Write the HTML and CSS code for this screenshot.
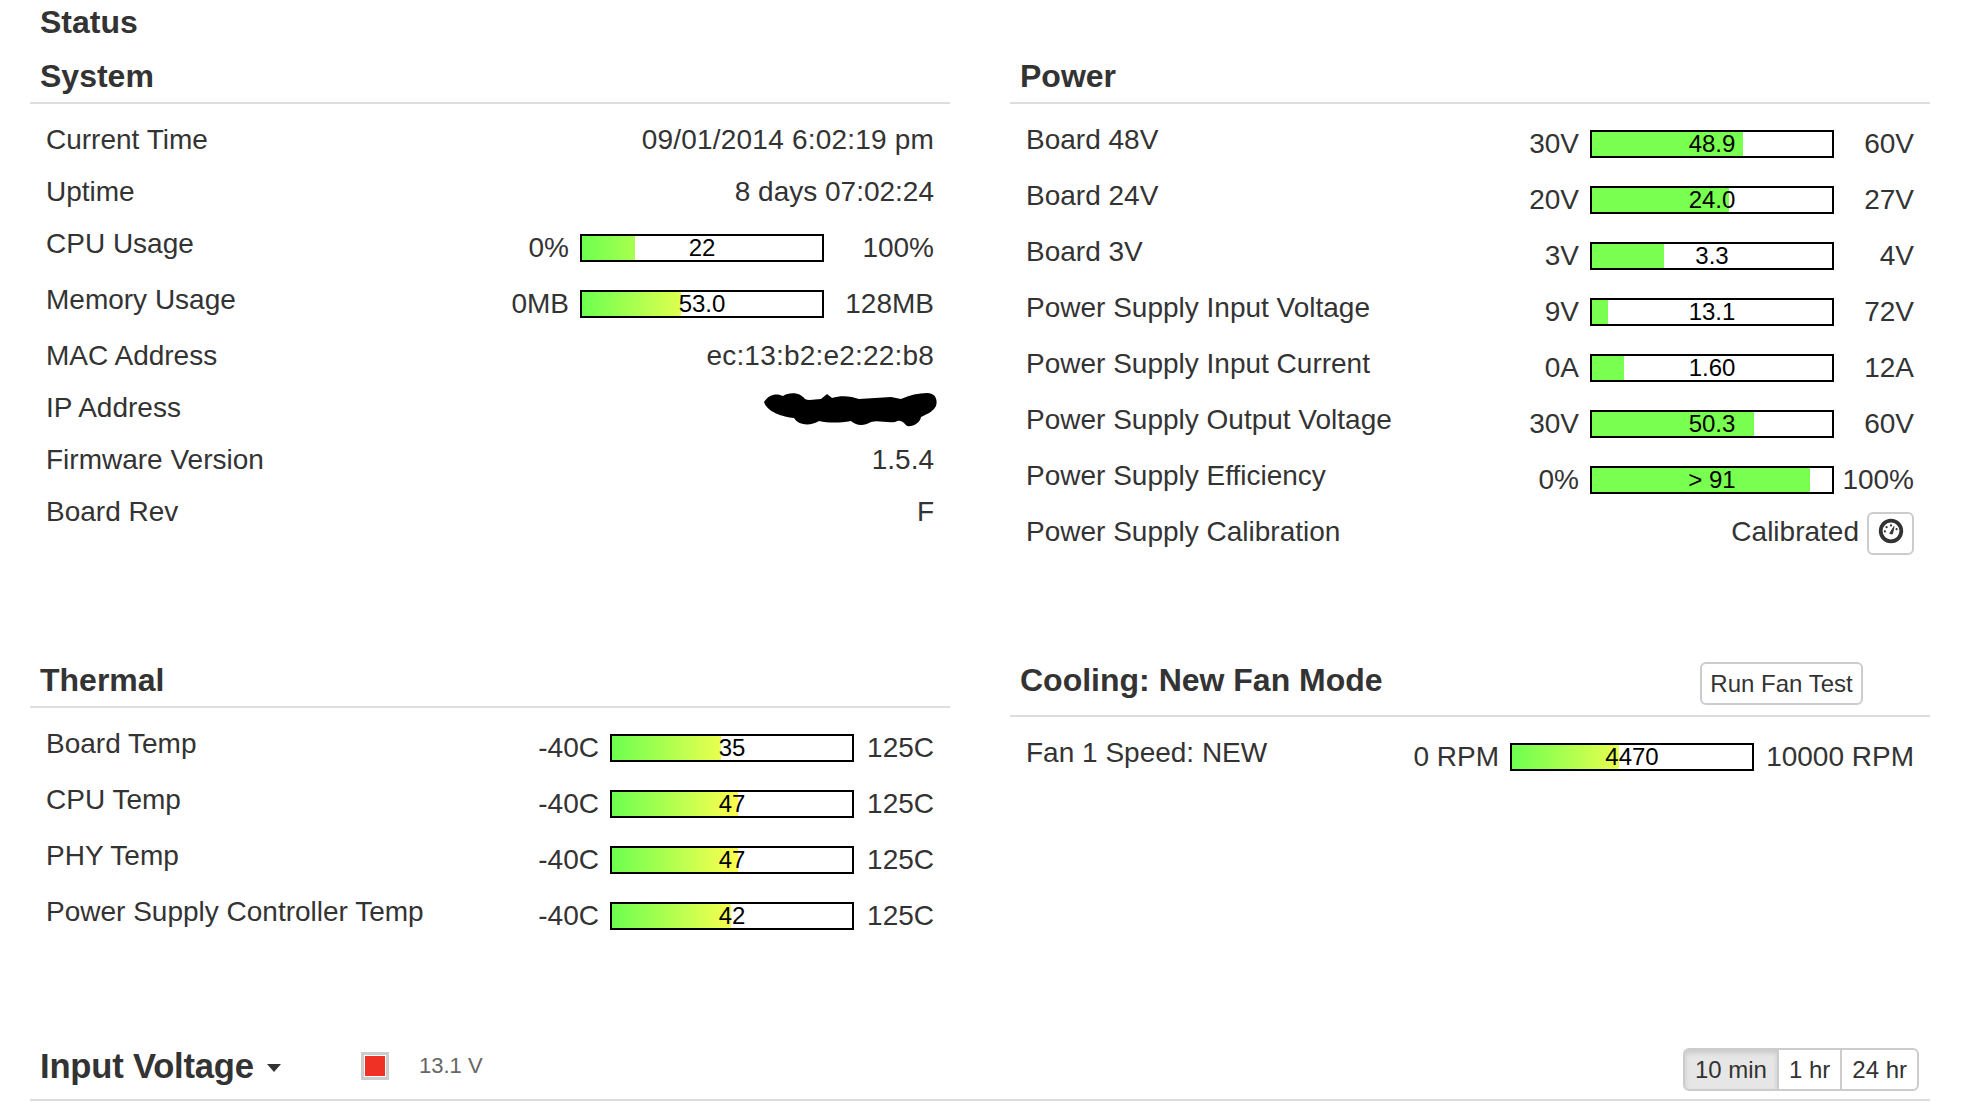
FILE: index.html
```html
<!DOCTYPE html>
<html>
<head>
    <meta charset="UTF-8">
    <title>Status</title>
    <link rel="stylesheet" href="styles.css">
</head>
<body>

    <h1 class="page_title">Status</h1>

    <div class="panels">

        <div class="panel">
            <h2 class="panel_head">System</h2>
            <div class="rows">
                <div class="row row_plain"><span>Current Time</span><span class="val_wide">09/01/2014 6:02:19 pm</span></div>
                <div class="row row_plain"><span>Uptime</span><span>8 days 07:02:24</span></div>
                <div class="row">
                    <span>CPU Usage</span>
                    <div class="meter meter_sys">
                        <span class="meter_min">0%</span>
                        <div class="bar"><div class="fill" style="width:22%"></div><div class="bar_val">22</div></div>
                        <span class="meter_max">100%</span>
                    </div>
                </div>
                <div class="row">
                    <span>Memory Usage</span>
                    <div class="meter meter_sys">
                        <span class="meter_min">0MB</span>
                        <div class="bar"><div class="fill" style="width:41.4%"></div><div class="bar_val">53.0</div></div>
                        <span class="meter_max">128MB</span>
                    </div>
                </div>
                <div class="row row_plain"><span>MAC Address</span><span class="val_wide">ec:13:b2:e2:22:b8</span></div>
                <div class="row row_plain">
                    <span>IP Address</span>
                    <svg class="scribble" width="174" height="34" viewBox="0 0 174 34"><path d="M1 9C6 1 14 0 20 3C26-1 37-1 42 6C46 8 52 6 58 6L64 1L69 5C78 2 88 3 96 6L128 4L138 6C146 2 156 0 164 0C172 0 175 6 173 13C170 19 164 21 158 24C157 30 150 34 144 33C140 29 138 26 132 29C122 30 116 27 108 29C100 34 92 32 88 28C76 30 66 30 56 28C48 33 36 33 31 25C20 24 4 19 1 9Z"/></svg>
                </div>
                <div class="row row_plain"><span>Firmware Version</span><span>1.5.4</span></div>
                <div class="row row_plain"><span>Board Rev</span><span>F</span></div>
            </div>
        </div>

        <div class="panel">
            <h2 class="panel_head">Power</h2>
            <div class="rows">
                <div class="row">
                    <span>Board 48V</span>
                    <div class="meter">
                        <span class="meter_min">30V</span>
                        <div class="bar"><div class="fill fill_solid" style="width:63%"></div><div class="bar_val">48.9</div></div>
                        <span class="meter_max">60V</span>
                    </div>
                </div>
                <div class="row">
                    <span>Board 24V</span>
                    <div class="meter">
                        <span class="meter_min">20V</span>
                        <div class="bar"><div class="fill fill_solid" style="width:57.1%"></div><div class="bar_val">24.0</div></div>
                        <span class="meter_max">27V</span>
                    </div>
                </div>
                <div class="row">
                    <span>Board 3V</span>
                    <div class="meter">
                        <span class="meter_min">3V</span>
                        <div class="bar"><div class="fill fill_solid" style="width:30%"></div><div class="bar_val">3.3</div></div>
                        <span class="meter_max">4V</span>
                    </div>
                </div>
                <div class="row">
                    <span>Power Supply Input Voltage</span>
                    <div class="meter">
                        <span class="meter_min">9V</span>
                        <div class="bar"><div class="fill fill_solid" style="width:6.5%"></div><div class="bar_val">13.1</div></div>
                        <span class="meter_max">72V</span>
                    </div>
                </div>
                <div class="row">
                    <span>Power Supply Input Current</span>
                    <div class="meter">
                        <span class="meter_min">0A</span>
                        <div class="bar"><div class="fill fill_solid" style="width:13.3%"></div><div class="bar_val">1.60</div></div>
                        <span class="meter_max">12A</span>
                    </div>
                </div>
                <div class="row">
                    <span>Power Supply Output Voltage</span>
                    <div class="meter">
                        <span class="meter_min">30V</span>
                        <div class="bar"><div class="fill fill_solid" style="width:67.7%"></div><div class="bar_val">50.3</div></div>
                        <span class="meter_max">60V</span>
                    </div>
                </div>
                <div class="row">
                    <span>Power Supply Efficiency</span>
                    <div class="meter">
                        <span class="meter_min">0%</span>
                        <div class="bar"><div class="fill fill_solid" style="width:91%"></div><div class="bar_val">&gt; 91</div></div>
                        <span class="meter_max">100%</span>
                    </div>
                </div>
                <div class="row">
                    <span>Power Supply Calibration</span>
                    <div class="calib">
                        <span>Calibrated</span>
                        <button class="btn btn_icon">
                            <svg width="26" height="26" viewBox="0 0 26 26"><circle cx="13" cy="13" r="10.3" fill="none" stroke="#333" stroke-width="3.8"/><path d="M11.8 15.4L16 8.6L14.4 16Z" fill="#333" stroke="#333"/><circle cx="13" cy="7.4" r="1.1" fill="#333"/><circle cx="8.6" cy="9.2" r="1.1" fill="#333"/><circle cx="6.9" cy="13.4" r="1.1" fill="#333"/><circle cx="18.6" cy="11.2" r="1.1" fill="#333"/></svg>
                        </button>
                    </div>
                </div>
            </div>
        </div>

        <div class="panel">
            <h2 class="panel_head">Thermal</h2>
            <div class="rows">
                <div class="row">
                    <span>Board Temp</span>
                    <div class="meter">
                        <span class="meter_min">-40C</span>
                        <div class="bar"><div class="fill" style="width:45.5%"></div><div class="bar_val">35</div></div>
                        <span class="meter_max">125C</span>
                    </div>
                </div>
                <div class="row">
                    <span>CPU Temp</span>
                    <div class="meter">
                        <span class="meter_min">-40C</span>
                        <div class="bar"><div class="fill" style="width:52.7%"></div><div class="bar_val">47</div></div>
                        <span class="meter_max">125C</span>
                    </div>
                </div>
                <div class="row">
                    <span>PHY Temp</span>
                    <div class="meter">
                        <span class="meter_min">-40C</span>
                        <div class="bar"><div class="fill" style="width:52.7%"></div><div class="bar_val">47</div></div>
                        <span class="meter_max">125C</span>
                    </div>
                </div>
                <div class="row">
                    <span>Power Supply Controller Temp</span>
                    <div class="meter">
                        <span class="meter_min">-40C</span>
                        <div class="bar"><div class="fill" style="width:49.7%"></div><div class="bar_val">42</div></div>
                        <span class="meter_max">125C</span>
                    </div>
                </div>
            </div>
        </div>

        <div class="panel">
            <h2 class="panel_head panel_head_btn">Cooling: New Fan Mode <button class="btn btn_test">Run Fan Test</button></h2>
            <div class="rows">
                <div class="row">
                    <span>Fan 1 Speed: NEW</span>
                    <div class="meter meter_fan">
                        <span class="meter_min">0 RPM</span>
                        <div class="bar"><div class="fill" style="width:44.7%"></div><div class="bar_val">4470</div></div>
                        <span class="meter_max">10000 RPM</span>
                    </div>
                </div>
            </div>
        </div>

    </div>

    <div class="graph_head">
        <h2 class="graph_title">Input Voltage <span class="caret"></span></h2>
        <span class="swatch"><span class="swatch_color"></span></span>
        <span class="graph_val">13.1 V</span>
        <div class="btn_group">
            <button class="btn active">10 min</button>
            <button class="btn">1 hr</button>
            <button class="btn">24 hr</button>
        </div>
    </div>

</body>
</html>
```

FILE: styles.css
```css
body{
    margin:0;
    padding:0 32px 0 30px;
    font-family:"Liberation Sans",Arial,sans-serif;
    font-size:28px;
    color:#333;
    background:#fff;
    overflow:hidden;
}
.page_title,
.panel_head{
    margin:0;
    font-size:32px;
    font-weight:bold;
    line-height:35px;
    padding-left:10px;
}
.page_title{
    padding-top:5px;
    margin-bottom:19px;
}
.panels{
    display:grid;
    grid-template-columns:920px 920px;
    column-gap:60px;
    row-gap:101px;
}
.panel_head{
    padding-bottom:8px;
    border-bottom:2px solid #ddd;
}
.panel_head_btn{
    display:flex;
    justify-content:space-between;
    align-items:flex-start;
    padding-bottom:10px;
    padding-right:67px;
}
.rows{
    margin-top:10px;
}
.row{
    display:flex;
    justify-content:space-between;
    align-items:flex-start;
    height:56px;
    padding:0 16px;
    line-height:52px;
}
.row_plain{
    height:52px;
}
.val_wide{
    letter-spacing:.2px;
}
.meter{
    display:flex;
    align-items:center;
    margin-top:16px;
    line-height:28px;
}
.meter_min{
    margin-right:11px;
}
.meter_max{
    width:80px;
    text-align:right;
}
.meter_sys .meter_max{
    width:110px;
}
.meter_fan .meter_max{
    width:160px;
}
.bar{
    display:grid;
    box-sizing:border-box;
    width:244px;
    height:28px;
    border:2px solid #000;
    background:#fff;
}
.fill,
.bar_val{
    grid-area:1/1;
}
.fill{
    background:linear-gradient(to right,#6dff4f,#ffff4f 53%,#ff4f4f) no-repeat;
    background-size:240px 100%;
}
.fill_solid{
    background:#78ff4f;
}
.bar_val{
    font-size:24px;
    line-height:24px;
    color:#000;
    text-align:center;
}
.scribble{
    margin:11px -3px 0 0;
}
.calib{
    display:flex;
    align-items:flex-start;
    gap:8px;
}
.btn{
    box-sizing:border-box;
    height:43px;
    padding:0 10px;
    border:2px solid #ccc;
    border-radius:6px;
    background:#fff;
    font-family:inherit;
    font-size:24px;
    font-weight:normal;
    white-space:nowrap;
    color:#333;
}
.btn_icon{
    display:flex;
    align-items:center;
    justify-content:center;
    width:47px;
    padding:0 0 5px;
    margin-top:6px;
}
.btn_test{
    width:163px;
    padding:0;
    margin-top:-1px;
}
.graph_head{
    display:flex;
    align-items:center;
    margin-top:91px;
    height:66px;
    padding:0 11px 0 10px;
    border-bottom:2px solid #ddd;
}
.graph_title{
    margin:0;
    width:321px;
    font-size:34.6px;
    font-weight:bold;
    letter-spacing:-.2px;
}
.caret{
    display:inline-block;
    margin-left:4px;
    vertical-align:middle;
    border-top:8px solid #333;
    border-left:7px solid transparent;
    border-right:7px solid transparent;
}
.swatch{
    box-sizing:border-box;
    width:28px;
    height:28px;
    padding:1px;
    border:3px solid #ccc;
}
.swatch_color{
    display:block;
    height:100%;
    background:#ee3124;
}
.graph_val{
    margin-left:30px;
    font-size:22px;
    color:#666;
}
.btn_group{
    display:flex;
    margin-left:auto;
    margin-top:7px;
}
.btn_group .btn{
    border-radius:0;
    margin-left:-2px;
}
.btn_group .btn:first-child{
    border-radius:6px 0 0 6px;
    margin-left:0;
}
.btn_group .btn:last-child{
    border-radius:0 6px 6px 0;
}
.btn_group .active{
    background:#e6e6e6;
    box-shadow:inset 0 3px 5px rgba(0,0,0,.125);
}
```
